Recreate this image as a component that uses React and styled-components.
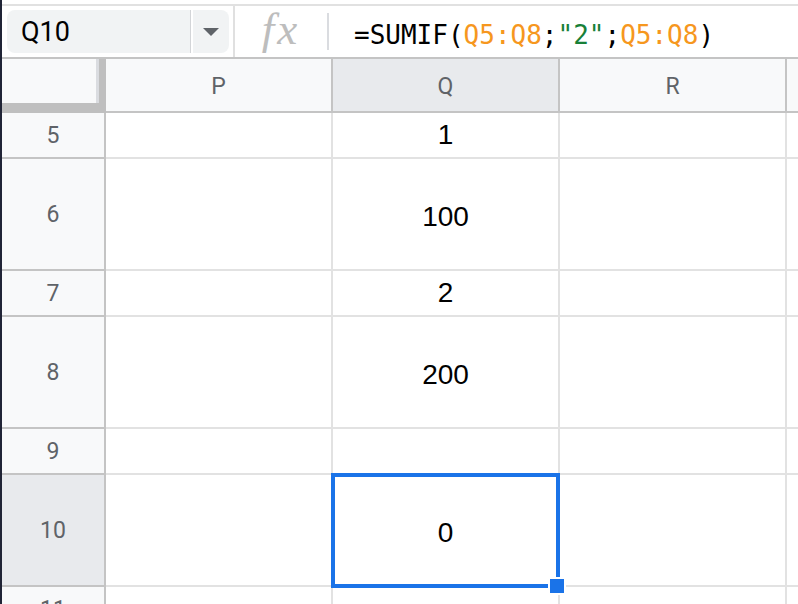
import React from 'react';
import styled, { createGlobalStyle } from 'styled-components';

const GlobalStyle = createGlobalStyle`
  html, body {
    margin: 0;
    padding: 0;
    background: #fff;
    overflow: hidden;
  }
  * {
    box-sizing: border-box;
  }
`;

const columns = ['P', 'Q', 'R', ''];
const rows = [
  { n: 5, value: '1' },
  { n: 6, value: '100', tall: true },
  { n: 7, value: '2' },
  { n: 8, value: '200', tall: true },
  { n: 9, value: '' },
  { n: 10, value: '0', tall: true, selected: true },
  { n: 11, value: '' },
];

const App = () => {
  return (
    <Page>
      <GlobalStyle />
      <TopStrip />
      <FormulaBar>
        <NameBox>
          <NameInput>Q10</NameInput>
          <Dropdown>
            <svg width="16" height="8" viewBox="0 0 16 8">
              <path d="M0 0 L16 0 L8 8 Z" fill="#5f6368" />
            </svg>
          </Dropdown>
        </NameBox>
        <FullDivider />
        <FxBox>fx</FxBox>
        <ShortDivider />
        <Formula>
          =SUMIF(<Ref>Q5:Q8</Ref>;<Str>"2"</Str>;<Ref>Q5:Q8</Ref>)
        </Formula>
      </FormulaBar>

      <GridRow height={54}>
        <Corner>
          <CornerFill />
        </Corner>
        {columns.map((c, i) => (
          <HeaderCell key={i} active={c === 'Q'} last={i === columns.length - 1}>
            {c}
          </HeaderCell>
        ))}
      </GridRow>

      {rows.map((r) => (
        <GridRow key={r.n} height={r.tall ? 112 : 46}>
          <RowHeader active={r.selected}>{r.n}</RowHeader>
          {columns.map((c, i) => (
            <Cell key={i} tall={r.tall} last={i === columns.length - 1}>
              {c === 'Q' && r.value}
              {c === 'Q' && r.selected && (
                <>
                  <Selection />
                  <Handle />
                </>
              )}
            </Cell>
          ))}
        </GridRow>
      ))}
    </Page>
  );
};

export default App;

const Page = styled.div`
  width: 798px;
  height: 604px;
  overflow: hidden;
  border-left: 2px solid #202436;
  display: flex;
  flex-direction: column;
`;

const TopStrip = styled.div`
  height: 6px;
  flex: none;
  border-bottom: 2px solid #e1e1e1;
`;

const FormulaBar = styled.div`
  height: 53px;
  flex: none;
  display: flex;
  align-items: center;
  border-bottom: 2px solid #c4c4c4;
`;

const NameBox = styled.div`
  display: flex;
  height: 43px;
  margin-left: 5px;
`;

const NameInput = styled.div`
  width: 184px;
  background: #f1f3f4;
  border-radius: 8px 0 0 8px;
  border-right: 1px solid #d3d5d8;
  margin-right: 2px;
  padding-left: 14px;
  display: flex;
  align-items: center;
  font-family: Roboto, 'Noto Sans', sans-serif;
  font-size: 27px;
  color: #000;
`;

const Dropdown = styled.div`
  width: 36px;
  background: #f1f3f4;
  border-radius: 0 8px 8px 0;
  display: flex;
  align-items: center;
  justify-content: center;
  padding-top: 1px;
`;

const FullDivider = styled.div`
  width: 2px;
  align-self: stretch;
  background: #e0e0e0;
  margin-left: 4px;
`;

const FxBox = styled.div`
  width: 92px;
  display: flex;
  justify-content: center;
  padding-bottom: 6px;
  font-family: 'Liberation Serif', serif;
  font-style: italic;
  font-size: 45px;
  letter-spacing: 3px;
  color: #bdbdbd;
`;

const ShortDivider = styled.div`
  width: 2px;
  height: 37px;
  background: #dadce0;
`;

const Formula = styled.div`
  margin-left: 25px;
  padding-top: 6px;
  font-family: 'DejaVu Sans Mono', 'Liberation Mono', monospace;
  font-size: 26px;
  color: #000;
  white-space: pre;
`;

const Ref = styled.span`
  color: #f6971e;
`;

const Str = styled.span`
  color: #188038;
`;

const GridRow = styled.div`
  flex: none;
  height: ${(props) => props.height}px;
  display: grid;
  grid-template-columns: 104px 227px 227px 227px 1fr;
`;

const Corner = styled.div`
  background: #bfbfbf;
`;

const CornerFill = styled.div`
  width: 97px;
  height: 44px;
  background: #f8f9fa;
  border-right: 3px solid #dadce0;
`;

const HeaderCell = styled.div`
  background: ${(props) => (props.active ? '#e8eaed' : '#f8f9fa')};
  border-right: ${(props) => (props.last ? 'none' : '2px solid #c4c4c4')};
  border-bottom: 2px solid #c4c4c4;
  display: flex;
  align-items: center;
  justify-content: center;
  padding-top: 3px;
  font-family: Roboto, 'Noto Sans', sans-serif;
  font-size: 23px;
  color: #5f6368;
`;

const RowHeader = styled.div`
  background: ${(props) => (props.active ? '#e8eaed' : '#f8f9fa')};
  border-right: 2px solid #c4c4c4;
  border-bottom: 2px solid #c4c4c4;
  display: flex;
  align-items: center;
  justify-content: center;
  font-family: Roboto, 'Noto Sans', sans-serif;
  font-size: 23px;
  color: #5f6368;
`;

const Cell = styled.div`
  position: relative;
  border-right: ${(props) => (props.last ? 'none' : '2px solid #e2e2e2')};
  border-bottom: 2px solid #e2e2e2;
  display: flex;
  align-items: center;
  justify-content: center;
  padding-top: ${(props) => (props.tall ? '6px' : '0')};
  font-family: 'Liberation Sans', Arial, sans-serif;
  font-size: 28px;
  color: #000;
`;

const Selection = styled.div`
  position: absolute;
  top: -2px;
  left: -2px;
  right: -2px;
  bottom: -3px;
  border: 4px solid #1a73e8;
  z-index: 2;
`;

const Handle = styled.div`
  position: absolute;
  right: -8px;
  bottom: -10px;
  width: 18px;
  height: 18px;
  background: #1a73e8;
  border: 2px solid #fff;
  z-index: 3;
`;
